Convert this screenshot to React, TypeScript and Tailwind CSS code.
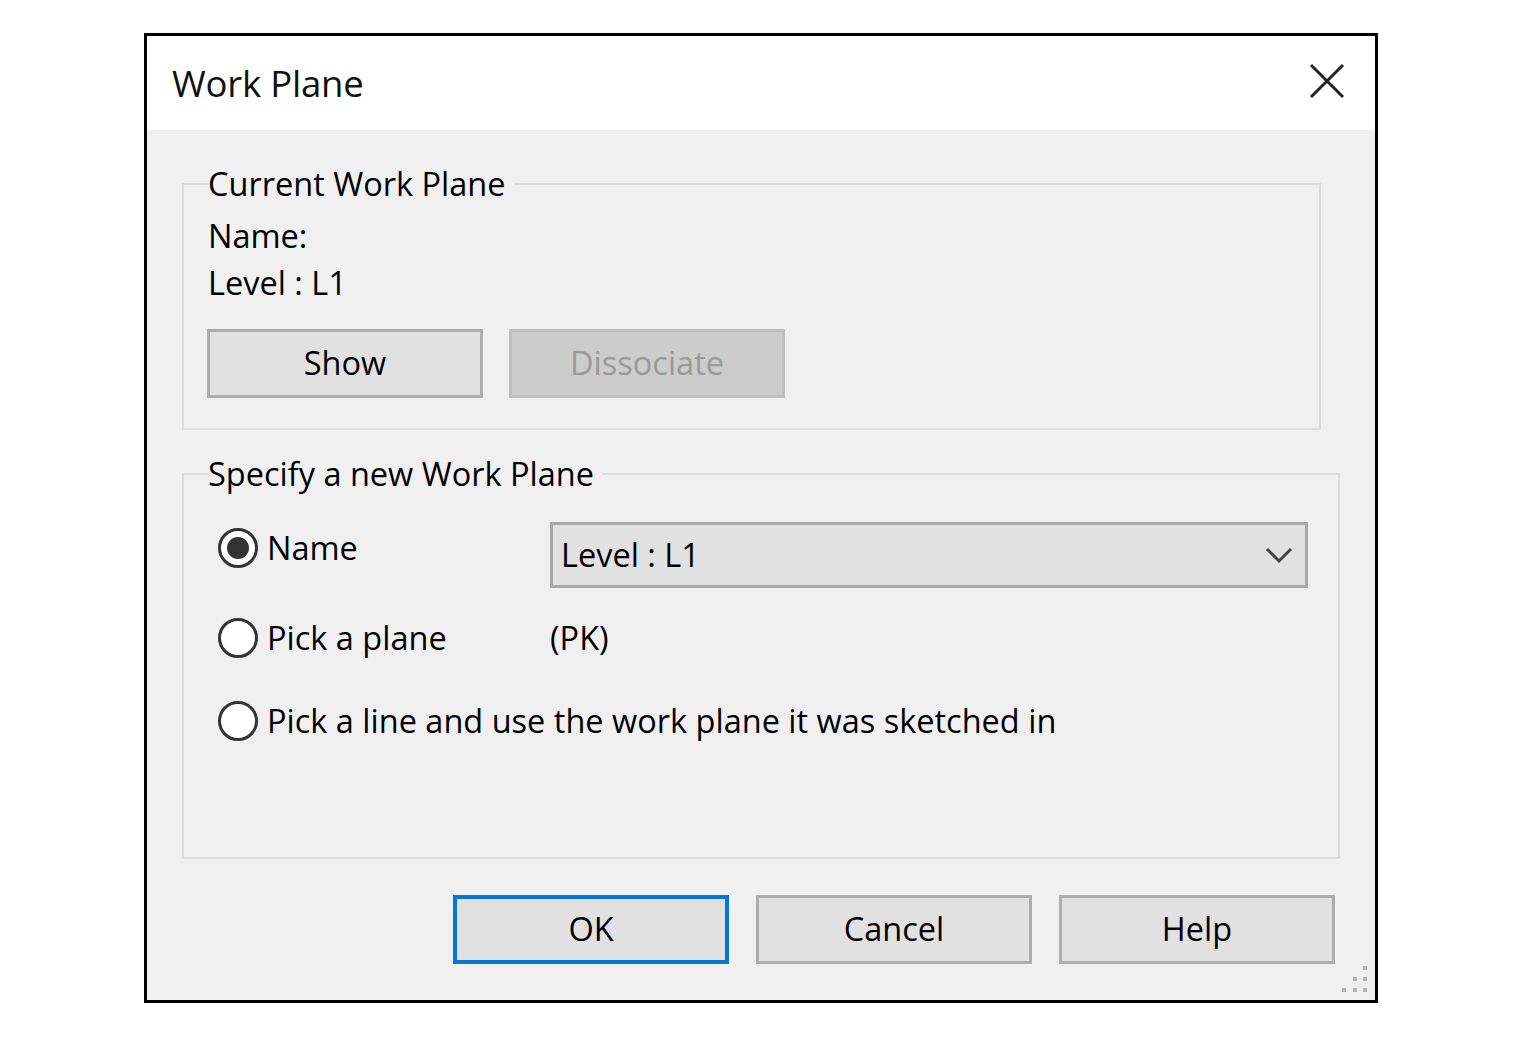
import React from 'react';

const font = 'font-["Open_Sans","Noto_Sans",sans-serif] font-medium';

// Classic radio bullet, filled when selected
const Radio: React.FC<{ checked?: boolean }> = ({ checked = false }) => (
  <span className="w-[40px] h-[40px] rounded-full border-[3px] border-[#333] bg-white flex items-center justify-center shrink-0">
    {checked && <span className="w-[22px] h-[22px] rounded-full bg-[#333]" />}
  </span>
);

const Button: React.FC<{ label: string; disabled?: boolean; primary?: boolean }> = ({
  label,
  disabled = false,
  primary = false,
}) => {
  const tone = disabled
    ? 'bg-[#cccccc] border-[3px] border-[#bfbfbf] text-[#9a9a9a]'
    : primary
      ? 'bg-[#e1e1e1] border-[4px] border-[#0078d7] text-black'
      : 'bg-[#e1e1e1] border-[3px] border-[#adadad] text-black';
  return (
    <div className={`w-[276px] h-[69px] flex items-center justify-center text-[32.5px] leading-none ${tone}`}>
      {label}
    </div>
  );
};

export default function App() {
  return (
    <div className={`min-h-screen bg-white pl-[144px] pt-[33px] ${font}`}>
      <div className="relative w-[1234px] h-[970px] border-[3px] border-black bg-[#f0f0f0] flex flex-col">
        {/* title bar */}
        <div className="h-[94px] bg-white flex items-center justify-between pl-[25px] pr-[30px]">
          <span className="text-[36.5px] text-[#111] tracking-[-0.2px]">Work Plane</span>
          <svg width="36" height="36" viewBox="0 0 36 36" className="mb-[4px]">
            <path d="M2 2L34 34M34 2L2 34" stroke="#222" strokeWidth="3" />
          </svg>
        </div>

        <div className="flex flex-col pl-[35px] text-[32.5px] text-black">
          {/* current plane group */}
          <fieldset className="mt-[31px] w-[1139px] border-2 border-[#dcdcdc] px-[24px] pb-[30px]">
            <legend className="pr-[8px] leading-[46px]">Current Work Plane</legend>
            <div className="leading-[47px] mt-[5px]">Name:</div>
            <div className="leading-[47px]">Level : L1</div>
            <div className="flex gap-[26px] mt-[23px] -ml-[1px]">
              <Button label="Show" />
              <Button label="Dissociate" disabled />
            </div>
          </fieldset>

          {/* new plane group */}
          <fieldset className="mt-[21px] w-[1158px] border-2 border-[#dcdcdc] px-[24px] pb-[116px]">
            <legend className="pr-[8px] leading-[46px]">Specify a new Work Plane</legend>
            <div className="flex items-start mt-[25px] pl-[10px]">
              <label className="w-[332px] flex items-center gap-[9px] mt-[6px] h-[40px]">
                <Radio checked />
                <span>Name</span>
              </label>
              <div className="w-[758px] h-[66px] border-[3px] border-[#a8a8a8] bg-[#e1e1e1] flex items-center justify-between pl-[8px] pr-[12px]">
                <span>Level : L1</span>
                <svg width="28" height="17" viewBox="0 0 28 17">
                  <path d="M2 2L14 14L26 2" fill="none" stroke="#444" strokeWidth="3" />
                </svg>
              </div>
            </div>
            <div className="flex items-center mt-[30px] pl-[10px] h-[40px]">
              <label className="w-[332px] flex items-center gap-[9px]">
                <Radio />
                <span>Pick a plane</span>
              </label>
              <span>(PK)</span>
            </div>
            <label className="flex items-center gap-[9px] mt-[43px] pl-[10px] h-[40px]">
              <Radio />
              <span>Pick a line and use the work plane it was sketched in</span>
            </label>
          </fieldset>

          {/* dialog buttons */}
          <div className="flex justify-end gap-[27px] mt-[36px] pr-[40px]">
            <Button label="OK" primary />
            <Button label="Cancel" />
            <Button label="Help" />
          </div>
        </div>

        {/* size grip */}
        <svg width="32" height="32" viewBox="0 0 32 32" className="absolute right-[4px] bottom-[4px]">
          {[
            [26, 4],
            [16, 15],
            [26, 15],
            [5, 26],
            [16, 26],
            [26, 26],
          ].map(([x, y]) => (
            <rect key={`${x}-${y}`} x={x - 2} y={y - 2} width="4" height="4" fill="#b4b4b4" />
          ))}
        </svg>
      </div>
    </div>
  );
}
